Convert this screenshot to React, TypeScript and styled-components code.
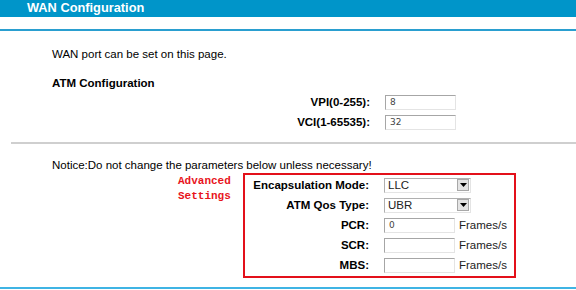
import styled, { createGlobalStyle } from "styled-components";

const GlobalStyle = createGlobalStyle`
  html, body {
    margin: 0;
    padding: 0;
    background: #ffffff;
  }
  body {
    font-family: "Liberation Sans", Arial, sans-serif;
    font-size: 11.5px;
    color: #000000;
  }
`;

interface FieldRow {
  label: string;
  kind: "input" | "select";
  value: string;
  unit?: string;
}

const atmRows: FieldRow[] = [
  { label: "VPI(0-255):", kind: "input", value: "8" },
  { label: "VCI(1-65535):", kind: "input", value: "32" },
];

const advancedRows: FieldRow[] = [
  { label: "Encapsulation Mode:", kind: "select", value: "LLC" },
  { label: "ATM Qos Type:", kind: "select", value: "UBR" },
  { label: "PCR:", kind: "input", value: "0", unit: "Frames/s" },
  { label: "SCR:", kind: "input", value: "", unit: "Frames/s" },
  { label: "MBS:", kind: "input", value: "", unit: "Frames/s" },
];

const FormRow = ({ row, labelWidth }: { row: FieldRow; labelWidth: number }) => (
  <Row>
    <Label $width={labelWidth}>{row.label}</Label>
    {row.kind === "select" ? (
      <SelectBox>
        <SelectText>{row.value}</SelectText>
        <ArrowButton>
          <svg width="7" height="4" viewBox="0 0 7 4">
            <path d="M0 0 H7 L3.5 4 Z" fill="#000" />
          </svg>
        </ArrowButton>
      </SelectBox>
    ) : (
      <TextBox>{row.value}</TextBox>
    )}
    {row.unit && <Unit>{row.unit}</Unit>}
  </Row>
);

export default function App() {
  return (
    <>
      <GlobalStyle />
      <Page>
        <Header>WAN Configuration</Header>
        <BlueRule />
        <Intro>WAN port can be set on this page.</Intro>
        <SectionTitle>ATM Configuration</SectionTitle>
        <AtmBlock>
          {atmRows.map((row) => (
            <FormRow key={row.label} row={row} labelWidth={370} />
          ))}
        </AtmBlock>
        <GrayRule />
        <Notice>Notice:Do not change the parameters below unless necessary!</Notice>
        <AdvancedArea>
          <AdvancedNote>
            Advanced
            <br />
            Settings
          </AdvancedNote>
          <RedBox>
            {advancedRows.map((row) => (
              <FormRow key={row.label} row={row} labelWidth={124} />
            ))}
          </RedBox>
        </AdvancedArea>
        <BottomRule />
      </Page>
    </>
  );
}

const Page = styled.div`
  width: 576px;
  height: 290px;
  overflow: hidden;
`;

const Header = styled.div`
  height: 17px;
  line-height: 16px;
  background: #0095c9;
  color: #ffffff;
  font-weight: bold;
  font-size: 12.8px;
  padding-left: 27px;
`;

const BlueRule = styled.div`
  margin-top: 12px;
  height: 2px;
  background: #2a9fd0;
`;

const Intro = styled.div`
  margin-top: 16px;
  padding-left: 52px;
  line-height: 14px;
`;

const SectionTitle = styled.div`
  margin-top: 15px;
  padding-left: 52px;
  font-weight: bold;
  line-height: 14px;
`;

const AtmBlock = styled.div`
  margin-top: 2px;
`;

const Row = styled.div`
  display: flex;
  align-items: center;
  height: 20px;
`;

const Label = styled.div<{ $width: number }>`
  width: ${(p) => p.$width}px;
  text-align: right;
  font-weight: bold;
  flex-shrink: 0;
`;

const TextBox = styled.div`
  margin-left: 15px;
  box-sizing: border-box;
  width: 71px;
  height: 15px;
  border-top: 1px solid #a6a6a6;
  border-left: 1px solid #a6a6a6;
  border-right: 1px solid #e4e4e4;
  border-bottom: 1px solid #e4e4e4;
  padding-left: 4px;
  font-family: "DejaVu Sans", Verdana, sans-serif;
  font-size: 9px;
  line-height: 13px;
  color: #444444;
`;

const SelectBox = styled.div`
  margin-left: 15px;
  box-sizing: border-box;
  width: 87px;
  height: 15px;
  display: flex;
  align-items: center;
  justify-content: space-between;
  border-top: 1px solid #b0b0b0;
  border-left: 1px solid #b0b0b0;
  border-right: 1px solid #e4e4e4;
  border-bottom: 1px solid #e4e4e4;
  padding-right: 1px;
`;

const SelectText = styled.span`
  padding-left: 3px;
  color: #222222;
`;

const ArrowButton = styled.span`
  box-sizing: border-box;
  width: 12px;
  height: 12px;
  display: flex;
  align-items: center;
  justify-content: center;
  background: #e4e4e4;
  border: 1px solid #a8a8a8;
`;

const Unit = styled.span`
  margin-left: 4px;
  color: #222222;
`;

const GrayRule = styled.div`
  margin-top: 10px;
  margin-left: 11px;
  height: 2px;
  background: #cfcfcf;
`;

const Notice = styled.div`
  margin-top: 14px;
  padding-left: 52px;
  line-height: 14px;
`;

const AdvancedArea = styled.div`
  margin-top: 1px;
  display: flex;
  align-items: flex-start;
  padding-left: 178px;
`;

const AdvancedNote = styled.div`
  width: 65px;
  margin-top: 1px;
  font-family: "Liberation Mono", "Courier New", monospace;
  font-weight: bold;
  font-size: 11px;
  line-height: 15px;
  color: #e8141c;
`;

const RedBox = styled.div`
  width: 273px;
  box-sizing: border-box;
  border: 2px solid #e3101a;
  padding: 0 0 1px 0;
`;

const BottomRule = styled.div`
  margin-top: 9px;
  height: 2px;
  background: #3fb4e4;
`;
